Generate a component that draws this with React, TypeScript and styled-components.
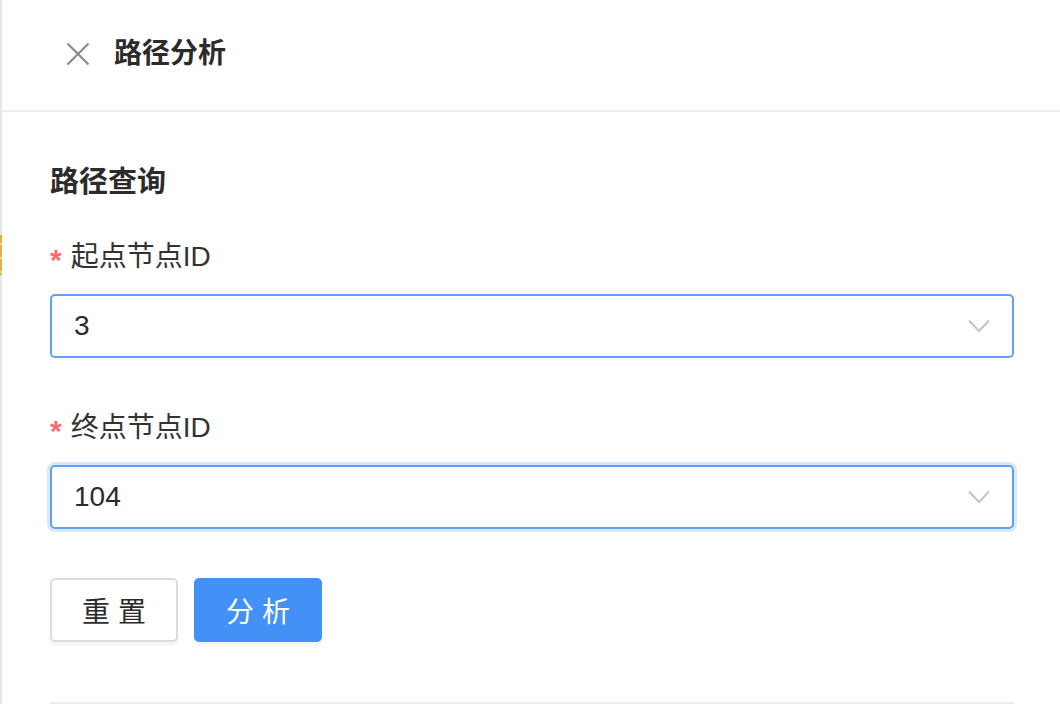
import React from "react";
import styled, { createGlobalStyle } from "styled-components";

const Global = createGlobalStyle`
  html, body { margin: 0; padding: 0; background: #fff; }
  body { font-family: "Liberation Sans", "Noto Sans CJK SC", sans-serif; color: #303133; }
  * { box-sizing: border-box; }
`;

const Page = styled.div`
  display: flex;
  width: 1060px;
  height: 704px;
  overflow: hidden;
`;

const LeftEdge = styled.div`
  width: 2px;
  flex: none;
  background: #e6e6e6;
  display: flex;
  flex-direction: column;
`;

const EdgeMark = styled.div`
  margin-top: 235px;
  height: 40px;
  background: repeating-linear-gradient(
    to bottom,
    #e2b243 0 8px,
    #e9d7a7 8px 10px,
    #e2b243 10px 14px
  );
`;

const Drawer = styled.div`
  flex: 1;
  display: flex;
  flex-direction: column;
`;

const Header = styled.header`
  height: 112px;
  flex: none;
  display: flex;
  align-items: center;
  gap: 23px;
  padding: 0 0 2px 63px;
  border-bottom: 2px solid #ececec;
`;

const CloseButton = styled.button`
  width: 26px;
  height: 26px;
  padding: 0;
  border: 0;
  background: none;
  display: flex;
  align-items: center;
  justify-content: center;
  cursor: pointer;
`;

const Title = styled.h1`
  margin: 0;
  font-size: 28px;
  line-height: 40px;
  font-weight: 600;
  color: #2b2b2b;
`;

const Body = styled.div`
  padding: 50px 46px 0 48px;
  display: flex;
  flex-direction: column;
`;

const SectionTitle = styled.h2`
  margin: 0 0 35px;
  font-size: 29px;
  line-height: 40px;
  font-weight: 600;
  color: #2b2b2b;
`;

const FormItem = styled.div<{ $gap: number }>`
  display: flex;
  flex-direction: column;
  margin-bottom: ${(p) => p.$gap}px;
`;

const Label = styled.label`
  font-size: 28px;
  line-height: 40px;
  color: #333;
  margin-bottom: 17px;
  display: flex;
  align-items: center;
`;

const Required = styled.span`
  color: #f56c6c;
  font-family: "Liberation Sans", sans-serif;
  font-weight: 700;
  font-size: 30px;
  line-height: 40px;
  margin-right: 9px;
  position: relative;
  top: 3px;
`;

const Select = styled.div<{ $focused?: boolean }>`
  height: 64px;
  border: 2px solid #5ea2f5;
  border-radius: 5px;
  display: flex;
  align-items: center;
  padding: 0 22px 0 22px;
  font-size: 28px;
  color: #2b2b2b;
  background: #fff;
  box-shadow: ${(p) => (p.$focused ? "0 0 0 3px #dae8fc" : "none")};
`;

const Value = styled.span`
  flex: 1;
`;

const Buttons = styled.div`
  display: flex;
  gap: 16px;
  margin-bottom: 60px;
`;

const Button = styled.button<{ $primary?: boolean }>`
  width: 128px;
  height: 64px;
  border-radius: 5px;
  font-family: inherit;
  font-size: 28px;
  cursor: pointer;
  border: 2px solid ${(p) => (p.$primary ? "#4390f6" : "#dcdcdc")};
  background: ${(p) => (p.$primary ? "#4390f6" : "#fff")};
  color: ${(p) => (p.$primary ? "#fff" : "#2b2b2b")};
  box-shadow: 0 4px 2px rgba(0, 0, 0, 0.04);
`;

const Divider = styled.div`
  height: 2px;
  background: #ededed;
`;

const Chevron = () => (
  <svg width="22" height="14" viewBox="0 0 22 14" fill="none">
    <path d="M1 1.5 L11 12 L21 1.5" stroke="#c0c4cc" strokeWidth="2" />
  </svg>
);

const CloseIcon = () => (
  <svg width="24" height="24" viewBox="0 0 24 24" fill="none">
    <path d="M1.5 1.5 L22.5 22.5 M22.5 1.5 L1.5 22.5" stroke="#8a8a8a" strokeWidth="2.2" />
  </svg>
);

export default function App() {
  return (
    <Page>
      <Global />
      <LeftEdge>
        <EdgeMark />
      </LeftEdge>
      <Drawer>
        <Header>
          <CloseButton aria-label="close">
            <CloseIcon />
          </CloseButton>
          <Title>路径分析</Title>
        </Header>
        <Body>
          <SectionTitle>路径查询</SectionTitle>
          <FormItem $gap={50}>
            <Label>
              <Required>*</Required>起点节点ID
            </Label>
            <Select>
              <Value>3</Value>
              <Chevron />
            </Select>
          </FormItem>
          <FormItem $gap={49}>
            <Label>
              <Required>*</Required>终点节点ID
            </Label>
            <Select $focused>
              <Value>104</Value>
              <Chevron />
            </Select>
          </FormItem>
          <Buttons>
            <Button>重 置</Button>
            <Button $primary>分 析</Button>
          </Buttons>
          <Divider />
        </Body>
      </Drawer>
    </Page>
  );
}
